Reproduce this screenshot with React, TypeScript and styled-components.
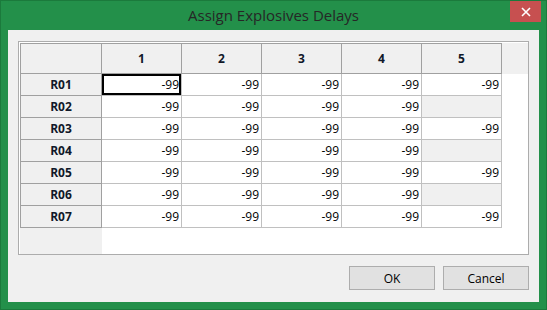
import React from "react";
import styled, { createGlobalStyle } from "styled-components";

const Global = createGlobalStyle`
  html, body {
    margin: 0;
    padding: 0;
    background: #ffffff;
  }
  * {
    box-sizing: border-box;
  }
`;

const Window = styled.div`
  width: 547px;
  height: 310px;
  background: #23904a;
  border: 1px solid #1b7a3c;
  display: flex;
  flex-direction: column;
  font-family: "Segoe UI", "Open Sans", "Liberation Sans", sans-serif;
`;

const TitleBar = styled.div`
  height: 29px;
  position: relative;
  display: flex;
  align-items: center;
  justify-content: center;
  color: #262626;
  font-size: 15px;
  padding-bottom: 1px;
`;

const CloseButton = styled.div`
  position: absolute;
  top: 0;
  right: 5px;
  width: 31px;
  height: 21px;
  background: #c75050;
  display: flex;
  align-items: center;
  justify-content: center;
`;

const Client = styled.div`
  flex: 1;
  margin: 0 7px 7px 7px;
  background: #f0f0f0;
  padding: 11px 10px 11px 10px;
  display: flex;
  flex-direction: column;
`;

const GridBox = styled.div`
  height: 214px;
  border: 1px solid #acacac;
  padding: 1px 0 0 1px;
  background: #ffffff;
  display: flex;
  flex-direction: column;
`;

const Row = styled.div<{ $h: number }>`
  display: grid;
  grid-template-columns: 82px repeat(5, 80px) 1fr;
  height: ${(p) => p.$h}px;
`;

const HeadCell = styled.div<{ $top?: boolean; $left?: boolean }>`
  background: #f0f0f0;
  border-right: 1px solid #a0a0a0;
  border-bottom: 1px solid #a0a0a0;
  border-top: ${(p) => (p.$top ? "1px solid #a0a0a0" : "none")};
  border-left: ${(p) => (p.$left ? "1px solid #a0a0a0" : "none")};
  display: flex;
  align-items: center;
  justify-content: center;
  font-weight: 700;
  font-size: 12px;
  color: #101828;
`;

const Filler = styled.div<{ $grey?: boolean }>`
  background: ${(p) => (p.$grey ? "#f0f0f0" : "#ffffff")};
`;

const Cell = styled.div<{ $empty?: boolean; $selected?: boolean }>`
  background: ${(p) => (p.$empty ? "#f0f0f0" : "#ffffff")};
  border-right: 1px solid #c0c0c0;
  border-bottom: 1px solid #c0c0c0;
  display: flex;
  align-items: center;
  justify-content: flex-end;
  padding-right: 2px;
  font-size: 12px;
  color: #000000;
  box-shadow: ${(p) => (p.$selected ? "inset 0 0 0 2px #000" : "none")};
`;

const Rest = styled.div`
  flex: 1;
  display: grid;
  grid-template-columns: 82px 1fr;
`;

const Buttons = styled.div`
  margin-top: 11px;
  display: flex;
  justify-content: flex-end;
  gap: 8px;
`;

const Button = styled.div`
  width: 86px;
  height: 24px;
  background: #e1e1e1;
  border: 1px solid #adadad;
  display: flex;
  align-items: center;
  justify-content: center;
  font-size: 12px;
  color: #000;
`;

const rows: (number | null)[][] = [
  [-99, -99, -99, -99, -99],
  [-99, -99, -99, -99, null],
  [-99, -99, -99, -99, -99],
  [-99, -99, -99, -99, null],
  [-99, -99, -99, -99, -99],
  [-99, -99, -99, -99, null],
  [-99, -99, -99, -99, -99],
];

const App = () => {
  return (
    <>
      <Global />
      <Window>
        <TitleBar>
          Assign Explosives Delays
          <CloseButton>
            <svg width="10" height="10" viewBox="0 0 10 10">
              <path d="M1 1 L9 9 M9 1 L1 9" stroke="#fff" strokeWidth="1.6" />
            </svg>
          </CloseButton>
        </TitleBar>
        <Client>
          <GridBox>
            <Row $h={31}>
              <HeadCell $top $left />
              {[1, 2, 3, 4, 5].map((n) => (
                <HeadCell $top key={n}>
                  {n}
                </HeadCell>
              ))}
              <Filler $grey />
            </Row>
            {rows.map((r, i) => (
              <Row $h={22} key={i}>
                <HeadCell $left>R0{i + 1}</HeadCell>
                {r.map((v, j) => (
                  <Cell key={j} $empty={v === null} $selected={i === 0 && j === 0}>
                    {v !== null ? v : ""}
                  </Cell>
                ))}
                <Filler />
              </Row>
            ))}
            <Rest>
              <Filler $grey />
              <Filler />
            </Rest>
          </GridBox>
          <Buttons>
            <Button>OK</Button>
            <Button>Cancel</Button>
          </Buttons>
        </Client>
      </Window>
    </>
  );
};

export default App;
